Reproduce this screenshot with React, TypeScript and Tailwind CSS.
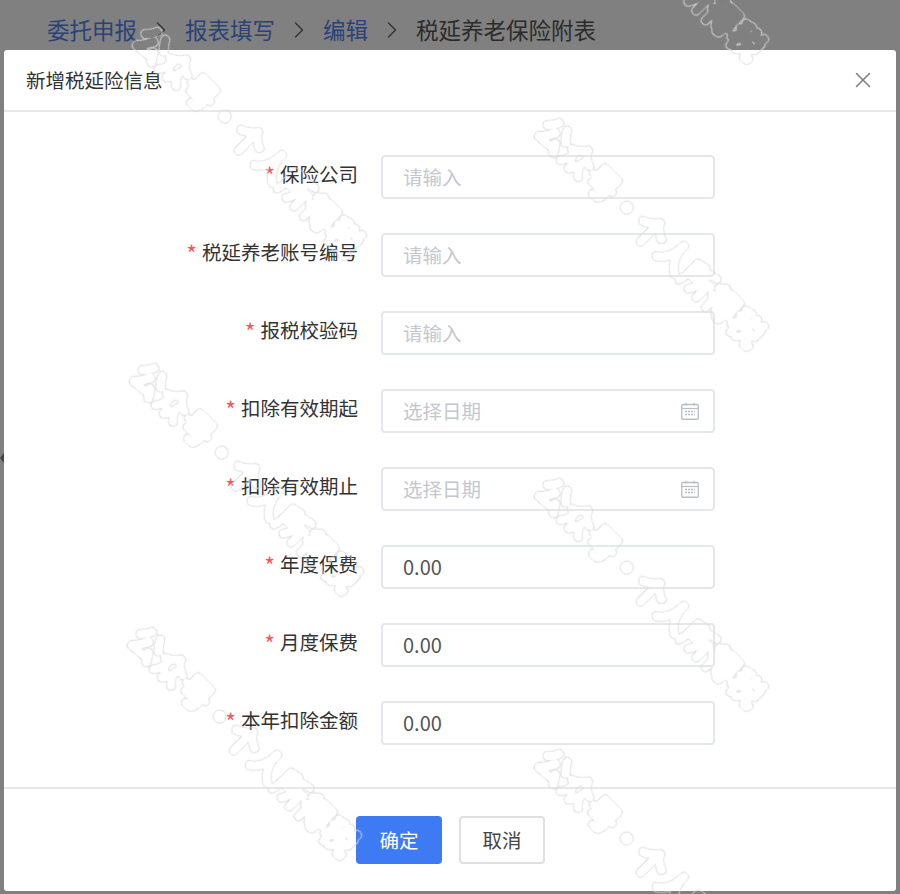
import { ChevronRight, X } from 'lucide-react';

const fields = [
  { label: '保险公司', placeholder: '请输入' },
  { label: '税延养老账号编号', placeholder: '请输入' },
  { label: '报税校验码', placeholder: '请输入' },
  { label: '扣除有效期起', placeholder: '选择日期', date: true },
  { label: '扣除有效期止', placeholder: '选择日期', date: true },
  { label: '年度保费', value: '0.00' },
  { label: '月度保费', value: '0.00' },
  { label: '本年扣除金额', value: '0.00' },
];

const marks = [
  'left-[141px] top-[15px]',
  'left-[543px] top-[106px]',
  'left-[138px] top-[351px]',
  'left-[543px] top-[466px]',
  'left-[136px] top-[615px]',
  'left-[543px] top-[737px]',
  'left-[543px] top-[-181px]',
];

function Watermark({ className }: { className: string }) {
  return (
    <div
      className={`absolute origin-left rotate-45 whitespace-nowrap text-[34px] leading-none font-bold text-black [filter:url(#wm-outline)] ${className}`}
    >
      公众号·个人所得税
    </div>
  );
}

function CalendarIcon() {
  return (
    <svg viewBox="0 0 18 18" className="size-[18px] text-[#b9bdc6]" fill="none" stroke="currentColor">
      <rect x="0.75" y="2.5" width="16.5" height="14.75" rx="1" strokeWidth="1.3" />
      <path d="M1 6.5h16" strokeWidth="1.2" />
      <path d="M5 0.8v3M13 0.8v3" strokeWidth="1.2" />
      <path d="M4 9.5h10M4 12.5h10" strokeWidth="1.4" strokeDasharray="2 1" />
    </svg>
  );
}

export default function App() {
  return (
    <div className="relative h-[894px] w-[900px] overflow-hidden bg-[#808080] font-['Noto_Sans_CJK_SC','Noto_Sans',sans-serif]">
      <svg className="absolute size-0">
        <filter id="wm-outline" x="-10%" y="-30%" width="120%" height="160%">
          <feGaussianBlur in="SourceAlpha" stdDeviation="1.7" result="soft" />
          <feComponentTransfer in="soft" result="ring">
            <feFuncA type="table" tableValues="0 0.9 0.1 0 0 0 0 0 0 0 0 0 0 0 0 0" />
          </feComponentTransfer>
          <feFlood floodColor="#dadada" />
          <feComposite in2="ring" operator="in" />
        </filter>
      </svg>

      <div className="flex h-[50px] items-center pl-[47px] pt-[9px] text-[22.5px] leading-none">
        <span className="text-[#2a4278]">委托申报</span>
        <ChevronRight className="mx-[10px] size-[28px] text-[#333]" strokeWidth={1.2} />
        <span className="text-[#2a4278]">报表填写</span>
        <ChevronRight className="mx-[10px] size-[28px] text-[#333]" strokeWidth={1.2} />
        <span className="text-[#2a4278]">编辑</span>
        <ChevronRight className="mx-[10px] size-[28px] text-[#333]" strokeWidth={1.2} />
        <span className="text-[#2b2b2b]">税延养老保险附表</span>
      </div>

      <div className="absolute left-0 top-[453px] h-0 w-0 border-y-[5px] border-r-[4px] border-y-transparent border-r-[#444]" />

      <div className="mx-[4px] h-[841px] rounded-[3px] bg-white">
        <div className="flex h-[62px] items-center justify-between border-b-2 border-[#e8e8e8] pl-[22px] pr-[20px]">
          <span className="text-[19.5px] leading-none text-[#333]">新增税延险信息</span>
          <X className="size-[26px] text-[#808080]" strokeWidth={1.4} />
        </div>

        <div className="flex h-[677px] flex-col gap-[34px] border-b-2 border-[#e8e8e8] pt-[43px]">
          {fields.map((f) => (
            <div key={f.label} className="flex h-[44px] items-center">
              <label className="flex w-[354px] items-start justify-end pb-[6px] text-[19.5px] leading-none text-[#333]">
                <span className="mr-[5px] pt-[2px] text-[23px] leading-[19px] text-[#f4585c]">*</span>
                {f.label}
              </label>
              <div className="ml-[23px] flex h-[44px] w-[334px] items-center justify-between rounded-[4px] border-2 border-[#e4e7ed] pl-[20px] pr-[14px]">
                {f.value ? (
                  <span className="text-[20px] text-[#555]">{f.value}</span>
                ) : (
                  <span className="text-[19.5px] text-[#c4c7ce]">{f.placeholder}</span>
                )}
                {f.date && <CalendarIcon />}
              </div>
            </div>
          ))}
        </div>

        <div className="flex gap-[17px] pl-[352px] pt-[27px]">
          <button className="h-[48px] w-[86px] rounded-[4px] bg-[#3f7af5] text-[19.5px] text-white">确定</button>
          <button className="h-[48px] w-[86px] rounded-[4px] border-2 border-[#e0e0e0] bg-white text-[19.5px] text-[#444]">
            取消
          </button>
        </div>
      </div>

      {marks.map((m) => (
        <Watermark key={m} className={m} />
      ))}
    </div>
  );
}
